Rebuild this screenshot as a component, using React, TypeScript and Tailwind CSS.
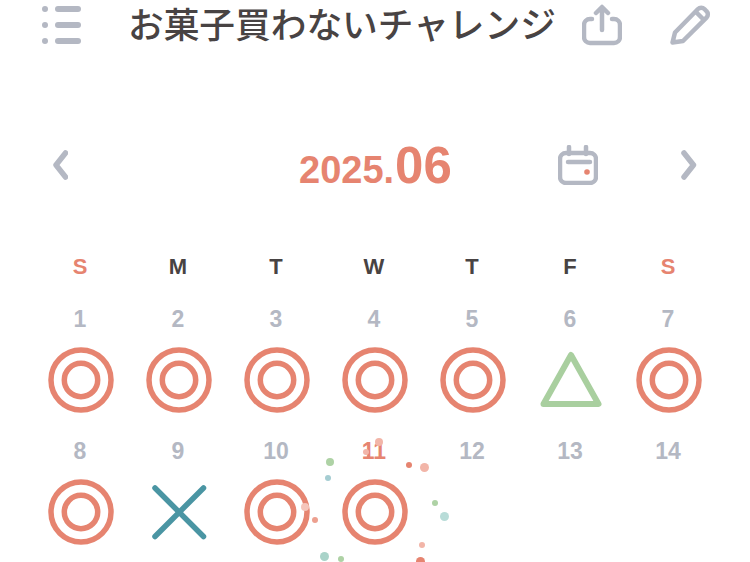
const grey = "#b4b8c3";
const salmon = "#e68470";

const dots = [
  "left-[326px] top-[458px] h-2 w-2 bg-[#aed2a5]",
  "left-[325px] top-[475px] h-1.5 w-1.5 bg-[#a5cdd2]",
  "left-[301px] top-[503px] h-2 w-2 bg-[#f5c5ba]",
  "left-[312px] top-[517px] h-1.5 w-1.5 bg-[#eda08f]",
  "left-[320px] top-[552px] h-[9px] w-[9px] bg-[#a9d3c9]",
  "left-[338px] top-[556px] h-1.5 w-1.5 bg-[#aed2a5]",
  "left-[375px] top-[438px] h-2 w-2 bg-[#f2b5a8]",
  "left-[363px] top-[449px] h-1.5 w-1.5 bg-[#f2b5a8]",
  "left-[406px] top-[462px] h-1.5 w-1.5 bg-[#e68470]",
  "left-[420px] top-[463px] h-[9px] w-[9px] bg-[#f2b5a8]",
  "left-[432px] top-[500px] h-1.5 w-1.5 bg-[#aed2a5]",
  "left-[440px] top-[512px] h-[9px] w-[9px] bg-[#b8dcd8]",
  "left-[419px] top-[542px] h-1.5 w-1.5 bg-[#f2b5a8]",
  "left-[416px] top-[557px] h-[9px] w-[9px] bg-[#e68470]",
];

const weekdays = ["S", "M", "T", "W", "T", "F", "S"];

type Mark = "double" | "triangle" | "cross" | null;

const days: { day: number; mark: Mark; today?: boolean }[] = [
  { day: 1, mark: "double" },
  { day: 2, mark: "double" },
  { day: 3, mark: "double" },
  { day: 4, mark: "double" },
  { day: 5, mark: "double" },
  { day: 6, mark: "triangle" },
  { day: 7, mark: "double" },
  { day: 8, mark: "double" },
  { day: 9, mark: "cross" },
  { day: 10, mark: "double" },
  { day: 11, mark: "double", today: true },
  { day: 12, mark: null },
  { day: 13, mark: null },
  { day: 14, mark: null },
];

const MarkIcon = ({ mark }: { mark: Mark }) => {
  if (!mark) return null;
  return (
    <svg className="ml-[2px]" width="66" height="66" viewBox="0 0 66 66" fill="none">
      {mark === "double" && (
        <g stroke={salmon} strokeWidth="5.5">
          <circle cx="33" cy="33" r="30" />
          <circle cx="33" cy="33" r="16.7" />
        </g>
      )}
      {mark === "triangle" && (
        <path
          d="M33 8 L60.5 57 H5.5 Z"
          stroke="#a9cf9f"
          strokeWidth="6"
          strokeLinejoin="round"
        />
      )}
      {mark === "cross" && (
        <path
          d="M9 9 L57.5 57.5 M57.5 9 L9 57.5"
          stroke="#4a95a3"
          strokeWidth="5.5"
          strokeLinecap="round"
        />
      )}
    </svg>
  );
};

const App = () => {
  return (
    <div className="relative h-[562px] w-[750px] overflow-hidden bg-white font-['Liberation_Sans',sans-serif]">
      <header className="flex h-[50px] items-start">
        <svg className="ml-[42px] shrink-0" width="40" height="50" viewBox="0 0 40 50" fill={grey}>
          <circle cx="3" cy="9" r="3" />
          <circle cx="3" cy="25" r="3" />
          <circle cx="3" cy="41" r="3" />
          <rect x="13" y="6" width="26" height="6" rx="3" />
          <rect x="13" y="22" width="26" height="6" rx="3" />
          <rect x="13" y="38" width="26" height="6" rx="3" />
        </svg>
        <h1 className="ml-[46px] w-[430px] shrink-0 whitespace-nowrap font-['Noto_Sans_CJK_JP',sans-serif] text-[35.7px] leading-[46px] font-medium text-[#484343]">
          お菓子買わないチャレンジ
        </h1>
        <svg className="mt-[4px] ml-[24px] shrink-0" width="40" height="42" viewBox="0 0 40 42" fill="none" stroke={grey} strokeWidth="4.5" strokeLinecap="round" strokeLinejoin="round">
          <path d="M10 15 H8 a6 6 0 0 0 -6 6 V33 a6 6 0 0 0 6 6 H32 a6 6 0 0 0 6 -6 V21 a6 6 0 0 0 -6 -6 H30" />
          <path d="M20 26 V4 M14 9 L20 3 L26 9" />
        </svg>
        <svg className="mt-[4px] ml-[47px] shrink-0" width="42" height="42" viewBox="0 0 42 42" fill="none" stroke={grey} strokeWidth="4.5" strokeLinejoin="round" strokeLinecap="round">
          <path d="M3.5 38.5 L6 28.5 L29 5 a4.5 4.5 0 0 1 6.4 0 L37.5 7.2 a4.5 4.5 0 0 1 0 6.4 L14 37 Z" />
          <path d="M27 8 L34.5 15.5" />
        </svg>
      </header>

      <div className="mt-[90px] flex h-[50px] items-center">
        <svg className="ml-[52px] shrink-0" width="16" height="32" viewBox="0 0 16 32" fill="none" stroke={grey} strokeWidth="5.5" strokeLinecap="round" strokeLinejoin="round">
          <path d="M13.5 4 L4 16 L13.5 28" />
        </svg>
        <div className="mt-[5px] ml-[231px] flex w-[152px] shrink-0 items-baseline whitespace-nowrap font-bold text-[#e68470]">
          <span className="text-[38px] leading-[50px]">2025.</span>
          <span className="ml-[1px] text-[51px] leading-[50px]">06</span>
        </div>
        <svg className="ml-[107px] shrink-0" width="40" height="40" viewBox="0 0 40 40" fill="none" stroke={grey} strokeWidth="4.5" strokeLinecap="round">
          <rect x="2" y="8" width="36" height="30" rx="6" />
          <path d="M11 2 V9 M28 2 V9 M10 17 H32" />
          <circle cx="29" cy="27" r="2.8" fill={salmon} stroke="none" />
        </svg>
        <svg className="ml-[83px] shrink-0" width="16" height="32" viewBox="0 0 16 32" fill="none" stroke={grey} strokeWidth="5.5" strokeLinecap="round" strokeLinejoin="round">
          <path d="M3 4 L12.5 16 L3 28" />
        </svg>
      </div>

      <div className="mt-[62px] ml-[31px] grid w-[686px] grid-cols-7">
        {weekdays.map((label, i) => (
          <div
            key={i}
            className={`h-[30px] text-center text-[22px] leading-[30px] font-bold ${
              label === "S" ? "text-[#e68470]" : "text-[#484343]"
            }`}
          >
            {label}
          </div>
        ))}
      </div>

      <div className="mt-[22px] ml-[31px] grid w-[686px] grid-cols-7">
        {days.map(({ day, mark, today }) => (
          <div key={day} className="flex h-[132px] flex-col items-center gap-[13px]">
            <span
              className={`h-[30px] text-[23px] leading-[30px] font-bold ${
                today ? "text-[#e68470]" : "text-[#b4b8c3]"
              }`}
            >
              {day}
            </span>
            <MarkIcon mark={mark} />
          </div>
        ))}
      </div>

      {dots.map((cls) => (
        <span key={cls} className={`absolute rounded-full ${cls}`} />
      ))}
    </div>
  );
};

export default App;
